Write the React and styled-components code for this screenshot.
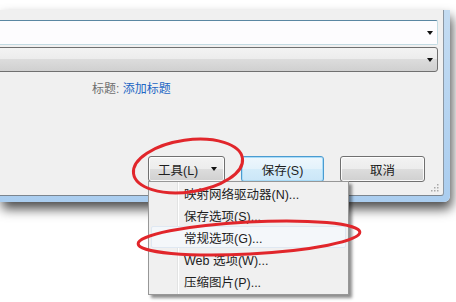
import styled, { createGlobalStyle } from "styled-components";

const GlobalStyle = createGlobalStyle`
  html, body {
    margin: 0;
    padding: 0;
    background: #ffffff;
  }
  body {
    font-family: "Liberation Sans", "Noto Sans CJK SC", sans-serif;
    font-size: 12px;
    color: #1e1e1e;
  }
`;

const Page = styled.div`
  position: relative;
  width: 456px;
  height: 302px;
  overflow: hidden;
  box-sizing: border-box;
  padding-top: 10px;
  background: #ffffff;
`;

const Frame = styled.div`
  width: 450px;
  box-sizing: border-box;
  padding: 0 6px 6px 0;
  background: linear-gradient(to bottom, #c4dcf2, #aacdef);
  border-bottom-right-radius: 6px;
  box-shadow: 2px 7px 12px rgba(0, 0, 0, 0.7);
`;

const Panel = styled.div`
  position: relative;
  height: 186px;
  box-sizing: border-box;
  display: flex;
  flex-direction: column;
  padding: 10px 5px 0 0;
  background: #f0f0f0;
  border-right: 1px solid #8b97a3;
  border-bottom: 1px solid #7b858f;
  border-bottom-right-radius: 3px;
`;

const Combo = styled.div`
  height: 25px;
  box-sizing: border-box;
  margin-left: -4px;
  display: flex;
  align-items: center;
  justify-content: flex-end;
  padding-right: 4px;
  border: 1px solid ${(p) => (p.$field ? "#c3dbe3" : "#707070")};
  border-top-color: ${(p) => (p.$field ? "#5b87a2" : "#707070")};
  border-radius: ${(p) => (p.$field ? "2px" : "3px")};
  background: ${(p) =>
    p.$field
      ? "#fdfcfe"
      : "linear-gradient(#f3f3f3, #ececec 50%, #dcdcdc 50%, #d0d0d0)"};
  & + & {
    margin-top: 2px;
  }
`;

const Arrow = styled.span`
  width: 0;
  height: 0;
  border-left: 3.5px solid transparent;
  border-right: 3.5px solid transparent;
  border-top: 4px solid #111;
`;

const TitleRow = styled.div`
  margin-top: 9px;
  padding-left: 92px;
  line-height: 16px;
  font-size: 12px;
`;

const Label = styled.span`
  color: #6e6e6e;
`;

const Link = styled.span`
  color: #2266c4;
`;

const ButtonRow = styled.div`
  margin-top: auto;
  margin-bottom: 13px;
  padding-right: 13px;
  display: flex;
  justify-content: flex-end;
  gap: 16px;
`;

const Button = styled.button`
  width: ${(p) => p.$w}px;
  height: 26px;
  box-sizing: border-box;
  padding: ${(p) => (p.$split ? "0 7px 0 9px" : "0")};
  display: flex;
  align-items: center;
  justify-content: ${(p) => (p.$split ? "space-between" : "center")};
  font: 12.5px "Liberation Sans", "Noto Sans CJK SC", sans-serif;
  color: #1e1e1e;
  border-radius: 3px;
  border: 1px solid ${(p) => (p.$default ? "#4b9bd0" : "#707070")};
  background: ${(p) =>
    p.$default
      ? "linear-gradient(#eef7fd, #e3f2fb 50%, #d4ecfa 50%, #cbe6f8)"
      : "linear-gradient(#f3f3f3, #ececec 50%, #dddddd 50%, #d0d0d0)"};
  box-shadow: inset 0 0 0 1px
    ${(p) => (p.$default ? "#a9dcf8" : "rgba(255, 255, 255, 0.85)")};
`;

const Grip = styled.svg`
  position: absolute;
  right: 4px;
  bottom: 3px;
`;

const Menu = styled.div`
  position: absolute;
  left: 148px;
  top: 181px;
  width: 201px;
  box-sizing: border-box;
  padding: 0 2px 2px;
  display: flex;
  flex-direction: column;
  border: 1px solid #979797;
  background-color: #f0f0f0;
  background-image: linear-gradient(
    to right,
    transparent 28px,
    #e2e3e3 28px,
    #e2e3e3 29px,
    #ffffff 29px,
    #ffffff 30px,
    transparent 30px
  );
  box-shadow: 3px 3px 3px rgba(0, 0, 0, 0.45);
`;

const MenuItem = styled.div`
  height: 22px;
  box-sizing: border-box;
  padding-left: 32px;
  display: flex;
  align-items: center;
  font-size: 12.5px;
  color: #1e1e1e;
  border: 1px solid ${(p) => (p.$hot ? "#dfe8f2" : "transparent")};
  border-radius: 2px;
  background: ${(p) => (p.$hot ? "#f4f7fa" : "transparent")};
`;

const Marks = styled.svg`
  position: absolute;
  left: 0;
  top: 0;
  pointer-events: none;
`;

const items = [
  "映射网络驱动器(N)...",
  "保存选项(S)...",
  "常规选项(G)...",
  "Web 选项(W)...",
  "压缩图片(P)...",
];

const App = () => {
  return (
    <Page>
      <GlobalStyle />
      <Frame>
        <Panel>
          <Combo $field>
            <Arrow />
          </Combo>
          <Combo>
            <Arrow />
          </Combo>
          <TitleRow>
            <Label>标题: </Label>
            <Link>添加标题</Link>
          </TitleRow>
          <ButtonRow>
            <Button $w={77} $split>
              <span>工具(L)</span>
              <Arrow />
            </Button>
            <Button $w={83} $default>
              保存(S)
            </Button>
            <Button $w={85}>取消</Button>
          </ButtonRow>
          <Grip width="9" height="9" viewBox="0 0 9 9">
            <g fill="#a8a8a8">
              <rect x="7" y="1" width="1.5" height="1.5" />
              <rect x="4" y="4" width="1.5" height="1.5" />
              <rect x="7" y="4" width="1.5" height="1.5" />
              <rect x="1" y="7" width="1.5" height="1.5" />
              <rect x="4" y="7" width="1.5" height="1.5" />
              <rect x="7" y="7" width="1.5" height="1.5" />
            </g>
          </Grip>
        </Panel>
      </Frame>
      <Menu>
        {items.map((label, i) => (
          <MenuItem key={label} $hot={i === 2}>
            {label}
          </MenuItem>
        ))}
      </Menu>
      <Marks width="456" height="302" viewBox="0 0 456 302">
        <g fill="none" stroke="#e1262b" strokeWidth="3">
          <ellipse cx="188" cy="166" rx="55" ry="26" transform="rotate(-8 188 166)" />
          <ellipse cx="249" cy="238" rx="111" ry="16" transform="rotate(-3 249 238)" />
        </g>
      </Marks>
    </Page>
  );
};

export default App;
